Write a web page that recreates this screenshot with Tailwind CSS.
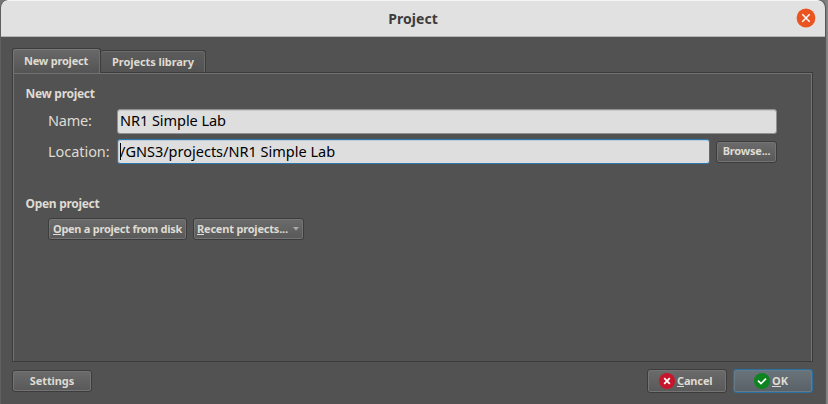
<!DOCTYPE html>
<html lang="en">
<head>
<meta charset="utf-8">
<title>Project</title>
<script src="https://cdn.jsdelivr.net/npm/@tailwindcss/browser@4"></script>
</head>
<body class="h-[404px] w-[828px] overflow-hidden bg-gradient-to-r from-[#777] from-[99.5%] to-[#8a8a8a] font-['Noto_Sans','Open_Sans',sans-serif] text-[#dfdbd2]">
<main class="flex h-[404px] w-[825px] flex-col overflow-hidden rounded-t-[8px] border-l border-[#5f5f5f] bg-[#525252] shadow-[1px_0_1px_#555]">
  <header class="relative flex h-[37px] shrink-0 items-center justify-center rounded-t-[7px] border-t border-b border-t-[#f5f5f5] border-b-[#b5b5b5] bg-[#e1e1e1] text-[#3d3d3d]">
    <h1 class="text-[14px] leading-5 font-bold tracking-[0.05px] whitespace-nowrap">Project</h1>
    <button aria-label="Close" class="absolute top-[7px] right-[9px] size-[20px]">
      <svg viewBox="0 0 20 20" class="size-full"><circle cx="10" cy="10" r="9.4" fill="#e95420"/><path d="M6.3 6.3 13.7 13.7M13.7 6.3 6.3 13.7" stroke="#fff" stroke-width="1.5"/></svg>
    </button>
  </header>

  <nav class="ml-[11px] flex h-[35px] shrink-0 items-end text-[11px] font-bold whitespace-nowrap">
    <button class="z-10 mb-[-1px] flex h-[25px] w-[89px] items-center justify-center rounded-t-[3px] border border-b-0 border-[#3c3c3c] bg-gradient-to-b from-[#696969] to-[#545454] pr-px tracking-[-0.2px] shadow-[inset_1px_1px_0_#777,inset_-1px_0_0_#707070]">New project</button>
    <button class="flex h-[22px] w-[105px] items-center justify-center rounded-t-[3px] border border-b-0 border-l-0 border-[#3c3c3c] bg-gradient-to-b from-[#5c5c5c] to-[#535353] pt-px tracking-[-0.08px] shadow-[inset_0_1px_0_#6d6d6d,inset_-1px_0_0_#6a6a6a]">Projects library</button>
  </nav>

  <section class="ml-[11px] h-[290px] w-[801px] shrink-0 border border-[#3c3c3c] pt-[13px] pl-[13px] shadow-[inset_1px_1px_0_#727272,inset_-1px_0_0_#727272]">
    <h2 class="ml-[-0.5px] h-[16px] text-[12px] leading-4 font-bold tracking-[-0.3px] whitespace-nowrap">New project</h2>
    <div class="mt-[6px] ml-[22px] flex h-[26px] items-center text-[14.5px]">
      <label class="w-[69px] tracking-[-0.25px] whitespace-nowrap">Name:</label>
      <div class="flex h-[25px] w-[660px] items-center rounded-[3px] border border-[#929292] bg-[#dedede] pl-[2px] tracking-[-0.05px] whitespace-nowrap text-black shadow-[inset_0_1px_0_#c8c8c8]">NR1 Simple Lab</div>
    </div>
    <div class="mt-[5px] ml-[22px] flex h-[25px] items-center text-[14.5px]">
      <label class="w-[69px] tracking-[-0.05px] whitespace-nowrap">Location:</label>
      <div class="flex h-[25px] w-[593px] items-center rounded-[3px] border border-[#2b79ad] bg-[#dedede] pl-[2px] whitespace-nowrap text-black shadow-[inset_0_1px_0_#bccbd5,inset_1px_0_0_#bccbd5]"><i class="h-[17px] w-px bg-black"></i><span class="ml-[-1px]">/GNS3/projects/NR1 Simple Lab</span></div>
      <button class="ml-[6px] flex h-[22px] w-[61px] items-center justify-center rounded-[3px] border border-[#3c3c3c] bg-gradient-to-b from-[#6b6b6b] to-[#595959] text-[11px] font-bold tracking-[-0.2px] shadow-[inset_0_0_0_1px_#747474]">Browse...</button>
    </div>
    <h2 class="mt-[32px] ml-[-0.5px] h-[16px] text-[12px] leading-4 font-bold tracking-[-0.3px] whitespace-nowrap">Open project</h2>
    <div class="mt-[6px] ml-[22px] flex h-[22px] gap-[6px] text-[11px] font-bold whitespace-nowrap">
      <button class="flex h-[22px] w-[139px] items-center justify-center rounded-[3px] border border-[#3c3c3c] bg-gradient-to-b from-[#6b6b6b] to-[#595959] tracking-[-0.26px] shadow-[inset_0_0_0_1px_#747474]"><span><span class="inline-block h-[14px] border-b border-current leading-[15px]">O</span>pen a project from disk</span></button>
      <button class="flex h-[22px] w-[111px] items-center rounded-[3px] border border-[#3c3c3c] bg-gradient-to-b from-[#6b6b6b] to-[#595959] pl-[3px] tracking-[-0.2px] shadow-[inset_0_0_0_1px_#747474]"><span class="w-[96px] text-left"><span class="inline-block h-[14px] border-b border-current leading-[15px]">R</span>ecent projects...</span><svg viewBox="0 0 6 4" class="h-[4px] w-[6px]"><path d="M0 0h6L3 3.5z" fill="#aaa"/></svg></button>
    </div>
  </section>

  <footer class="mt-[7px] ml-[11px] flex h-[24px] w-[801px] shrink-0 items-start text-[11px] font-bold whitespace-nowrap">
    <button class="mt-px flex h-[22px] w-[80px] items-center justify-center rounded-[3px] border border-[#3c3c3c] bg-gradient-to-b from-[#6b6b6b] to-[#595959] tracking-[-0.1px] shadow-[inset_0_0_0_1px_#747474]">Settings</button>
    <button class="ml-auto flex h-[24px] w-[80px] items-center rounded-[3px] border border-[#3c3c3c] bg-gradient-to-b from-[#6b6b6b] to-[#595959] pl-[11px] tracking-[-0.15px] shadow-[inset_0_0_0_1px_#747474]"><svg viewBox="0 0 16 16" class="mr-[2px] size-[16px]"><circle cx="8" cy="8" r="8" fill="#c7162b"/><path d="m5.2 5.2 5.6 5.6m0-5.6-5.6 5.6" stroke="#fff" stroke-width="1.8"/></svg><span><span class="inline-block h-[14px] border-b border-current leading-[15px]">C</span>ancel</span></button>
    <button class="ml-[6px] flex h-[24px] w-[80px] items-center rounded-[3px] border border-[#2b6f9c] bg-gradient-to-b from-[#6a747b] to-[#596167] pl-[20px] shadow-[inset_0_0_0_1px_#687b88]"><svg viewBox="0 0 16 16" class="mr-[2px] size-[16px]"><circle cx="8" cy="8" r="8" fill="#0e8420"/><path d="m4 7.6 3 2.9 5-4.8" fill="none" stroke="#fff" stroke-width="1.7"/></svg><span><span class="inline-block h-[14px] border-b border-current leading-[15px]">O</span>K</span></button>
  </footer>
</main>
</body>
</html>
